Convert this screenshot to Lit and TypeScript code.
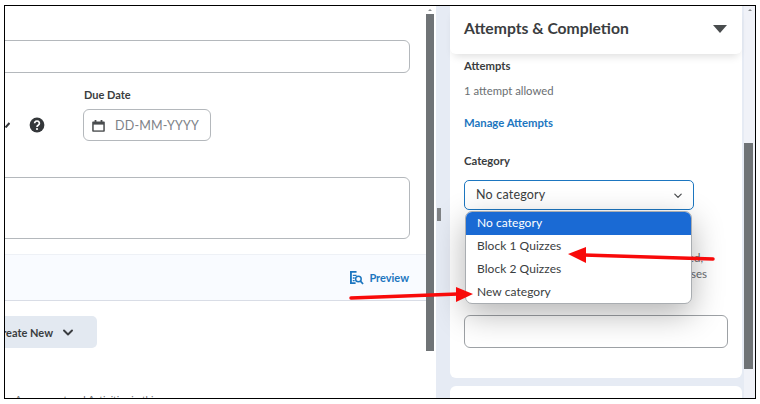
import { LitElement, html, css, svg } from "lit";
import { customElement } from "lit/decorators.js";

@customElement("app-root")
export class AppRoot extends LitElement {
  static styles = css`
    :host { display: block; width: 760px; height: 404px; background: #fff; font-family: Lato, "Open Sans", sans-serif; color: #202122; overflow: hidden; position: relative; }
    .frame { box-sizing: border-box; width: 752px; height: 394px; margin: 5px 0 0 4px; border: 1px solid #000; display: flex; overflow: hidden; }
    .left { width: 421px; flex: none; overflow: hidden; background: #fff; position: relative; }
    .lc { margin-left: -20px; display: flex; flex-direction: column; padding-top: 34px; height: 100%; box-sizing: border-box; }
    .input { box-sizing: border-box; border: 1px solid #b4b8bc; border-radius: 6px; background: #fff; flex: none; }
    .title { width: 425px; height: 33px; }
    .daterow { display: flex; align-items: flex-end; margin-top: 15px; height: 53px; padding-left: 20px; flex: none; }
    .check { width: 9px; height: 32px; display: flex; align-items: center; flex: none; }
    .help { width: 16px; height: 32px; margin-left: 15px; display: flex; align-items: center; flex: none; }
    .dategroup { margin-left: 38px; display: flex; flex-direction: column; }
    .lab { font-size: 11px; font-weight: 700; color: #3a3d40; line-height: 14px; margin-bottom: 7px; margin-left: 1px; }
    .date { width: 128px; height: 32px; display: flex; align-items: center; padding-left: 8px; gap: 10px; color: #7d8287; font-size: 12.5px; letter-spacing: 0.2px; }
    .area { width: 425px; height: 62px; margin-top: 36px; }
    .band { margin-top: 15px; margin-left: 20px; height: 47px; background: #f9fbff; border-top: 1px solid #eef1f6; border-bottom: 1px solid #d9dde6; box-sizing: border-box; display: flex; align-items: center; justify-content: flex-end; gap: 5px; padding-right: 17px; color: #1c76c0; font-size: 11px; font-weight: 700; flex: none; }
    .btn { margin-top: 15px; width: 112px; height: 32px; background: #e3e9f1; border-radius: 5px; display: flex; align-items: center; justify-content: flex-end; padding-right: 24px; box-sizing: border-box; gap: 10px; font-size: 11px; font-weight: 700; color: #3a3d40; white-space: nowrap; flex: none; }
    .faint { margin-top: 44px; margin-left: 30px; font-size: 10px; color: #6a6e71; line-height: 14px; height: 3px; white-space: nowrap; flex: none; }
    .sb { width: 8px; flex: none; background: #fff; display: flex; flex-direction: column; align-items: stretch; }
    .sb .up { height: 8px; display: flex; justify-content: center; align-items: center; flex: none; }
    .sb .up i { border: 2px solid transparent; border-bottom: 2px solid #8a8d90; border-top: 0; width: 0; height: 0; display: block; }
    .lthumb { height: 337px; background: #6f7376; flex: none; }
    .right { flex: 1; min-width: 0; margin-left: 2px; background: #e6ebf4; display: flex; position: relative; overflow: hidden; }
    .handle { width: 4px; height: 13px; background: #7f8285; flex: none; margin-left: 1px; margin-top: 202px; }
    .col { width: 292px; margin-left: 9px; flex: none; display: flex; flex-direction: column; gap: 8px; }
    .card { background: #fff; height: 372px; border-radius: 0 0 6px 6px; flex: none; position: relative; }
    .next { background: #fff; height: 30px; border-radius: 6px 6px 0 0; flex: none; }
    .head { height: 48px; display: flex; align-items: center; justify-content: space-between; padding: 0 15px 5px 14px; box-sizing: border-box; box-shadow: 0 6px 8px -4px rgba(0,0,0,.14); background: #fff; font-size: 15.7px; font-weight: 700; color: #3a3d40; border-radius: 0 0 6px 6px; }
    .tri { border-left: 7.5px solid transparent; border-right: 7.5px solid transparent; border-top: 8px solid #494c4e; width: 0; height: 0; margin-top: 3px; }
    .body { padding: 5px 14px 0; display: flex; flex-direction: column; position: relative; }
    .rl { font-size: 11.3px; font-weight: 700; color: #3a3d40; line-height: 14px; }
    .txt { font-size: 11.3px; color: #6a6e71; line-height: 14px; margin-top: 11px; }
    .link { font-size: 11.3px; font-weight: 700; color: #1c76c0; line-height: 14px; margin-top: 18px; }
    .cat { margin-top: 24px; }
    .select { box-sizing: border-box; width: 230px; height: 30px; margin-top: 12px; border: 1.5px solid #1c76c0; border-radius: 5px; display: flex; align-items: center; justify-content: space-between; padding: 0 11px 2px 11px; font-size: 12.5px; color: #3a3d40; letter-spacing: 0.2px; }
    .select svg { margin-top: 3px; }
    .behind { margin-top: 40px; width: 243px; font-size: 11.5px; line-height: 16px; color: #6a6e71; white-space: nowrap; overflow: hidden; }
    .line { display: flex; justify-content: flex-end; }
    .line.a { padding-right: 4px; }
    .box2 { width: 264px; height: 33px; margin-top: 33px; border-color: #9da1a5; }
    .menu { position: absolute; left: 15px; top: 205px; width: 227px; height: 93px; box-sizing: border-box; background: #fff; border: 1px solid #a9adb1; border-radius: 7px; box-shadow: 0 10px 32px rgba(0,0,0,.3); overflow: hidden; font-size: 12px; letter-spacing: 0.05px; color: #3a3d40; z-index: 2; }
    .item { height: 23px; display: flex; align-items: center; padding: 0 0 2px 11px; box-sizing: border-box; }
    .item.sel { background: #1a6ad4; color: #fff; }
    .rtrack { width: 11px; flex: none; margin-left: 2px; background: #f0f2f8; display: flex; flex-direction: column; }
    .rtrack .up { height: 8px; display: flex; justify-content: center; align-items: center; flex: none; }
    .rtrack .up i { border: 2px solid transparent; border-bottom: 2px solid #8a8d90; border-top: 0; display: block; }
    .rthumb { margin-top: 129px; height: 226px; width: 9px; background: #6f7376; flex: none; }
    .arrows { position: absolute; left: 0; top: 0; pointer-events: none; z-index: 5; }
  `;

  private chevron(w: number, color: string, sw: number) {
    return html`<svg width=${w} height=${w * 0.7} viewBox="0 0 10 7"><path d="M1 1.5 L5 5.5 L9 1.5" fill="none" stroke=${color} stroke-width=${sw} stroke-linecap="round" stroke-linejoin="round"/></svg>`;
  }

  render() {
    return html`
      <div class="frame">
        <div class="left">
          <div class="lc">
            <div class="input title"></div>
            <div class="daterow">
              <div class="check"><svg width="5" height="6" viewBox="0 0 5 6"><path d="M0.5 5.5 L4.5 1" stroke="#34373a" stroke-width="2" fill="none"/></svg></div>
              <div class="help">
                <svg width="16" height="16" viewBox="0 0 16 16"><circle cx="8" cy="8" r="7.4" fill="#34373a"/><path d="M5.6 6.3a2.4 2.3 0 1 1 3.6 2c-.8.5-1.2.8-1.2 1.6" fill="none" stroke="#fff" stroke-width="1.7"/><circle cx="8" cy="12" r="1.1" fill="#fff"/></svg>
              </div>
              <div class="dategroup">
                <div class="lab">Due Date</div>
                <div class="input date">
                  <svg width="13" height="13" viewBox="0 0 13 13"><path d="M1 2.5h11a.8.8 0 0 1 .8.8V12a.8.8 0 0 1-.8.8H1a.8.8 0 0 1-.8-.8V3.3A.8.8 0 0 1 1 2.5z" fill="#494c4e"/><rect x="1.7" y="5.6" width="9.6" height="5.8" fill="#fff"/><rect x="2.6" y="1" width="1.8" height="2.6" fill="#494c4e"/><rect x="8.6" y="1" width="1.8" height="2.6" fill="#494c4e"/></svg>
                  <span>DD-MM-YYYY</span>
                </div>
              </div>
            </div>
            <div class="input area"></div>
            <div class="band">
              <svg width="14" height="14" viewBox="0 0 15 15"><path d="M7 1H1v12h5" fill="none" stroke="#1c76c0" stroke-width="2"/><path d="M3 4.7h4M3 7.5h2M3 10.3h2" stroke="#1c76c0" stroke-width="1.4"/><circle cx="9" cy="8.5" r="3" fill="none" stroke="#1c76c0" stroke-width="1.6"/><path d="M11.2 10.8L14 14" stroke="#1c76c0" stroke-width="1.8"/></svg>
              <span>Preview</span>
            </div>
            <div class="btn"><span>Create New</span>${this.chevron(10, "#3a3d40", 1.9)}</div>
            <div class="faint">Assessment and Activities in this course</div>
          </div>
        </div>
        <div class="sb"><div class="up"><i></i></div><div class="lthumb"></div></div>
        <div class="right">
          <div class="handle"></div>
          <div class="col">
            <div class="card">
              <div class="head"><span>Attempts &amp; Completion</span><span class="tri"></span></div>
              <div class="body">
                <div class="rl">Attempts</div>
                <div class="txt">1 attempt allowed</div>
                <div class="link">Manage Attempts</div>
                <div class="rl cat">Category</div>
                <div class="select"><span>No category</span>${this.chevron(8, "#494c4e", 1.5)}</div>
                <div class="behind"><div class="line a">Grades are released once attempts are graded,</div><div class="line">and count towards the overall grade for courses</div></div>
                <div class="input box2"></div>
              </div>
              <div class="menu">
                <div class="item sel">No category</div>
                <div class="item">Block 1 Quizzes</div>
                <div class="item">Block 2 Quizzes</div>
                <div class="item">New category</div>
              </div>
            </div>
            <div class="next"></div>
          </div>
          <div class="rtrack"><div class="up"><i></i></div><div class="rthumb"></div></div>
        </div>
      </div>
      <svg class="arrows" width="760" height="404" viewBox="0 0 760 404">
        ${svg`<path d="M713 259 L584 255" stroke="#f80a0a" stroke-width="3.5" stroke-linecap="round"/>
        <path d="M568 254 L586 247 L586 263 Z" fill="#f80a0a"/>
        <path d="M351 298 L458 294" stroke="#f80a0a" stroke-width="3.5" stroke-linecap="round"/>
        <path d="M473 294 L456 287 L456 302 Z" fill="#f80a0a"/>`}
      </svg>
    `;
  }
}
